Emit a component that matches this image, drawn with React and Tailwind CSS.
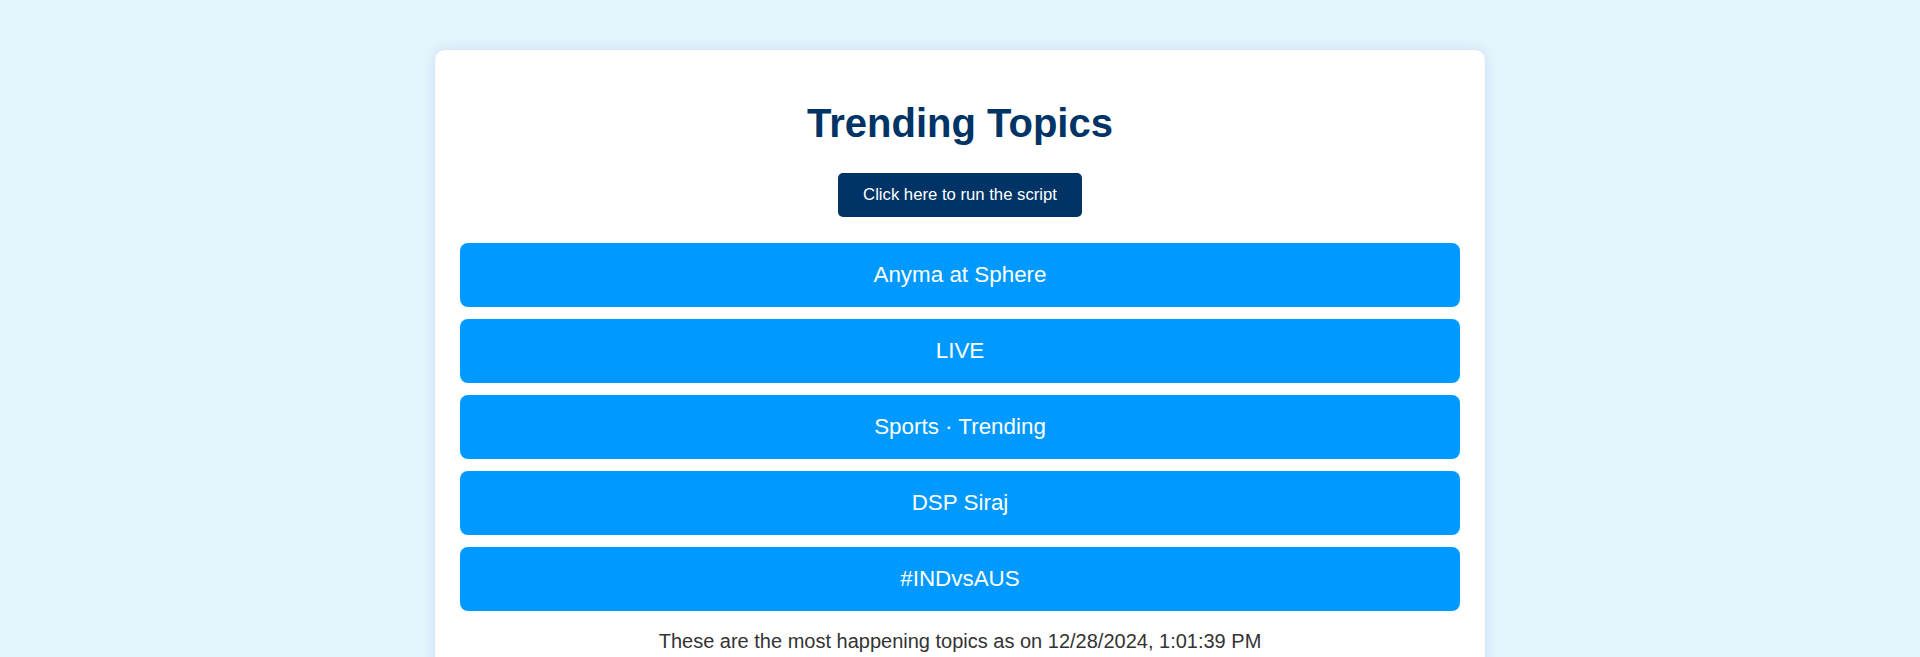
const topics = ["Anyma at Sphere", "LIVE", "Sports · Trending", "DSP Siraj", "#INDvsAUS"];

export default function App() {
  return (
    <div
      className="min-h-screen bg-[#e3f4fd] pt-[50px]"
      style={{ fontFamily: '"Liberation Sans", Arial, sans-serif' }}
    >
      <div className="mx-auto w-[1050px] rounded-[10px] bg-white px-[25px] pt-[50px] pb-[40px] shadow-[0_0_12px_rgba(0,60,120,0.12)]">
        <h1 className="text-center text-[40px] font-bold leading-[46px] text-[#003366]">
          Trending Topics
        </h1>
        <div className="mt-[27px] flex justify-center">
          <button className="flex h-[44px] items-center rounded-[5px] bg-[#003366] px-[25px] text-[16.7px] text-white">
            Click here to run the script
          </button>
        </div>
        <div className="mt-[26px] flex flex-col gap-[12px]">
          {topics.map((t) => (
            <div
              key={t}
              className="flex h-[64px] items-center justify-center rounded-[8px] bg-[#0099ff] text-[22.4px] text-white"
            >
              {t}
            </div>
          ))}
        </div>
        <p className="mt-[19px] text-center text-[20px] leading-[23px] text-[#333333]">
          These are the most happening topics as on 12/28/2024, 1:01:39 PM
        </p>
      </div>
    </div>
  );
}
